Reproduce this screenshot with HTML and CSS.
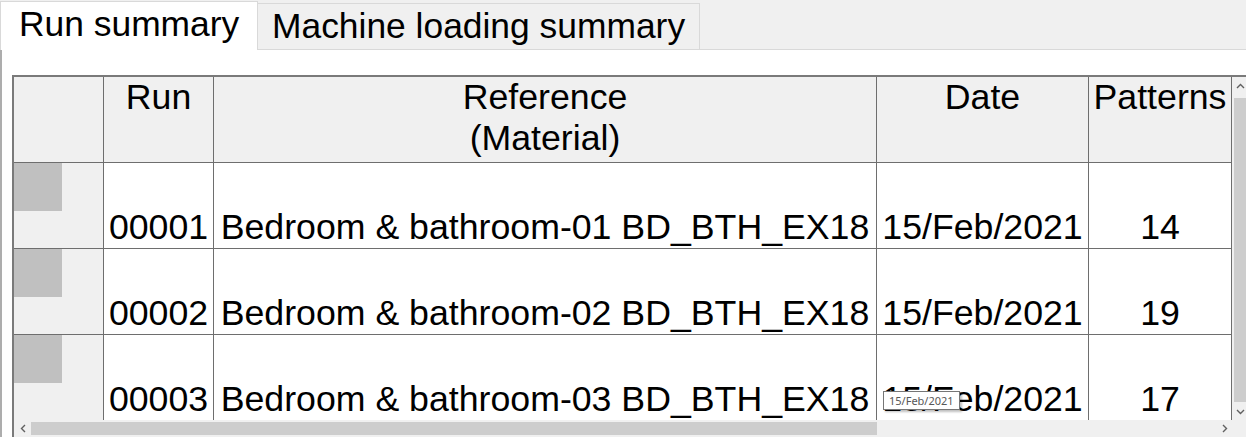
FILE: index.html
```html
<!DOCTYPE html>
<html>
<head>
<meta charset="utf-8">
<link rel="stylesheet" href="styles.css">
</head>
<body>
<div class="window">
  <div class="tabbar">
    <div class="tab tab-active">Run summary</div>
    <div class="tab tab-idle">Machine loading summary</div>
  </div>
  <div class="panel">
    <div class="frame">
      <div class="viewport-row">
        <div class="grid">
          <div class="rowhead hd"></div>
          <div class="hd">Run</div>
          <div class="hd">Reference<br>(Material)</div>
          <div class="hd">Date</div>
          <div class="hd">Patterns</div>

          <div class="rowhead"><span class="marker"></span></div>
          <div class="cell">00001</div>
          <div class="cell">Bedroom &amp; bathroom-01 BD_BTH_EX18</div>
          <div class="cell">15/Feb/2021</div>
          <div class="cell">14</div>

          <div class="rowhead"><span class="marker"></span></div>
          <div class="cell">00002</div>
          <div class="cell">Bedroom &amp; bathroom-02 BD_BTH_EX18</div>
          <div class="cell">15/Feb/2021</div>
          <div class="cell">19</div>

          <div class="rowhead"><span class="marker"></span></div>
          <div class="cell">00003</div>
          <div class="cell">Bedroom &amp; bathroom-03 BD_BTH_EX18</div>
          <div class="cell">15/Feb/2021</div>
          <div class="cell">17</div>
        </div>
        <div class="vscroll">
          <div class="sbtn">
            <svg width="9" height="6" viewBox="0 0 9 6"><path d="M1 5 L4.5 1.5 L8 5" fill="none" stroke="#606060" stroke-width="1.4"/></svg>
          </div>
          <div class="vtrack"><div class="vthumb"></div></div>
          <div class="sbtn">
            <svg width="9" height="6" viewBox="0 0 9 6"><path d="M1 1 L4.5 4.5 L8 1" fill="none" stroke="#606060" stroke-width="1.4"/></svg>
          </div>
        </div>
      </div>
      <div class="hscroll-row">
        <div class="hscroll">
          <div class="sbtn">
            <svg width="6" height="9" viewBox="0 0 6 9"><path d="M5 1 L1.5 4.5 L5 8" fill="none" stroke="#606060" stroke-width="1.4"/></svg>
          </div>
          <div class="htrack"><div class="hthumb"></div></div>
          <div class="sbtn">
            <svg width="6" height="9" viewBox="0 0 6 9"><path d="M1 1 L4.5 4.5 L1 8" fill="none" stroke="#606060" stroke-width="1.4"/></svg>
          </div>
        </div>
        <div class="corner"></div>
      </div>
    </div>
  </div>
  <div class="tooltip">15/Feb/2021</div>
</div>
</body>
</html>
```

FILE: styles.css
```css
html, body {
  margin: 0;
  padding: 0;
  background: #ffffff;
}
body {
  width: 1246px;
  height: 437px;
  overflow: hidden;
  font-family: "Liberation Sans", Arial, sans-serif;
  color: #000;
}
.window {
  position: relative;
  width: 1246px;
  height: 437px;
  overflow: hidden;
}
.tabbar {
  display: flex;
  align-items: flex-start;
  height: 49px;
  background: #f0f0f0;
  border-bottom: 1px solid #d9d9d9;
}
.tab {
  box-sizing: border-box;
  font-size: 35.4px;
  line-height: 40px;
  white-space: nowrap;
}
.tab-active {
  width: 258px;
  height: 49px;
  margin-top: 1px;
  padding: 2px 0 0 18px;
  background: #ffffff;
  border: 1px solid #d9d9d9;
  border-bottom: none;
  position: relative;
  z-index: 1;
}
.tab-idle {
  width: 442px;
  height: 46px;
  margin-top: 3px;
  padding: 2px 0 0 14px;
  background: #f0f0f0;
  border-top: 1px solid #d9d9d9;
  border-right: 1px solid #d9d9d9;
}
.panel {
  height: 387px;
  box-sizing: border-box;
  border-left: 2px solid #adadad;
  padding: 25px 0 0 10px;
  background: #fff;
}
.frame {
  border-top: 2px solid #7a7a7a;
  border-left: 2px solid #7a7a7a;
  width: 1240px;
}
.viewport-row {
  display: flex;
  height: 343px;
  overflow: hidden;
}
.grid {
  display: grid;
  grid-template-columns: 89px 109px 662px 211px 142px;
  grid-auto-rows: 85px;
  gap: 1px;
  padding-right: 1px;
  background: #6e6e6e;
  flex: none;
  align-self: flex-start;
  font-size: 35.7px;
  line-height: 41px;
}
.hd {
  background: #f0f0f0;
  text-align: center;
  white-space: nowrap;
}
.rowhead {
  background: #f0f0f0;
}
.marker {
  display: block;
  width: 48px;
  height: 48px;
  background: #c0c0c0;
}
.cell {
  background: #fff;
  display: flex;
  align-items: flex-end;
  justify-content: center;
  white-space: nowrap;
}
.vscroll {
  width: 17px;
  flex: none;
  display: flex;
  flex-direction: column;
  background: #f0f0f0;
}
.sbtn {
  width: 17px;
  height: 17px;
  display: flex;
  align-items: center;
  justify-content: center;
  flex: none;
}
.vtrack {
  flex: 1;
  padding: 4px 2px 1px 2px;
  display: flex;
}
.vthumb {
  flex: 1;
  background: #cdcdcd;
}
.hscroll-row {
  display: flex;
  height: 17px;
}
.hscroll {
  width: 1219px;
  display: flex;
  background: #f0f0f0;
}
.htrack {
  flex: 1;
  padding: 2px 0;
  display: flex;
}
.hthumb {
  width: 846px;
  background: #cdcdcd;
}
.corner {
  width: 17px;
  background: #f0f0f0;
}
.tooltip {
  position: absolute;
  left: 883px;
  top: 391px;
  width: 77px;
  height: 19px;
  box-sizing: border-box;
  background: #fff;
  border: 1px solid #767676;
  box-shadow: 2px 2px 2px rgba(0,0,0,0.25);
  font-family: "Noto Sans", "Liberation Sans", sans-serif;
  font-size: 11px;
  line-height: 17px;
  color: #575757;
  padding-left: 5px;
  white-space: nowrap;
}
```
